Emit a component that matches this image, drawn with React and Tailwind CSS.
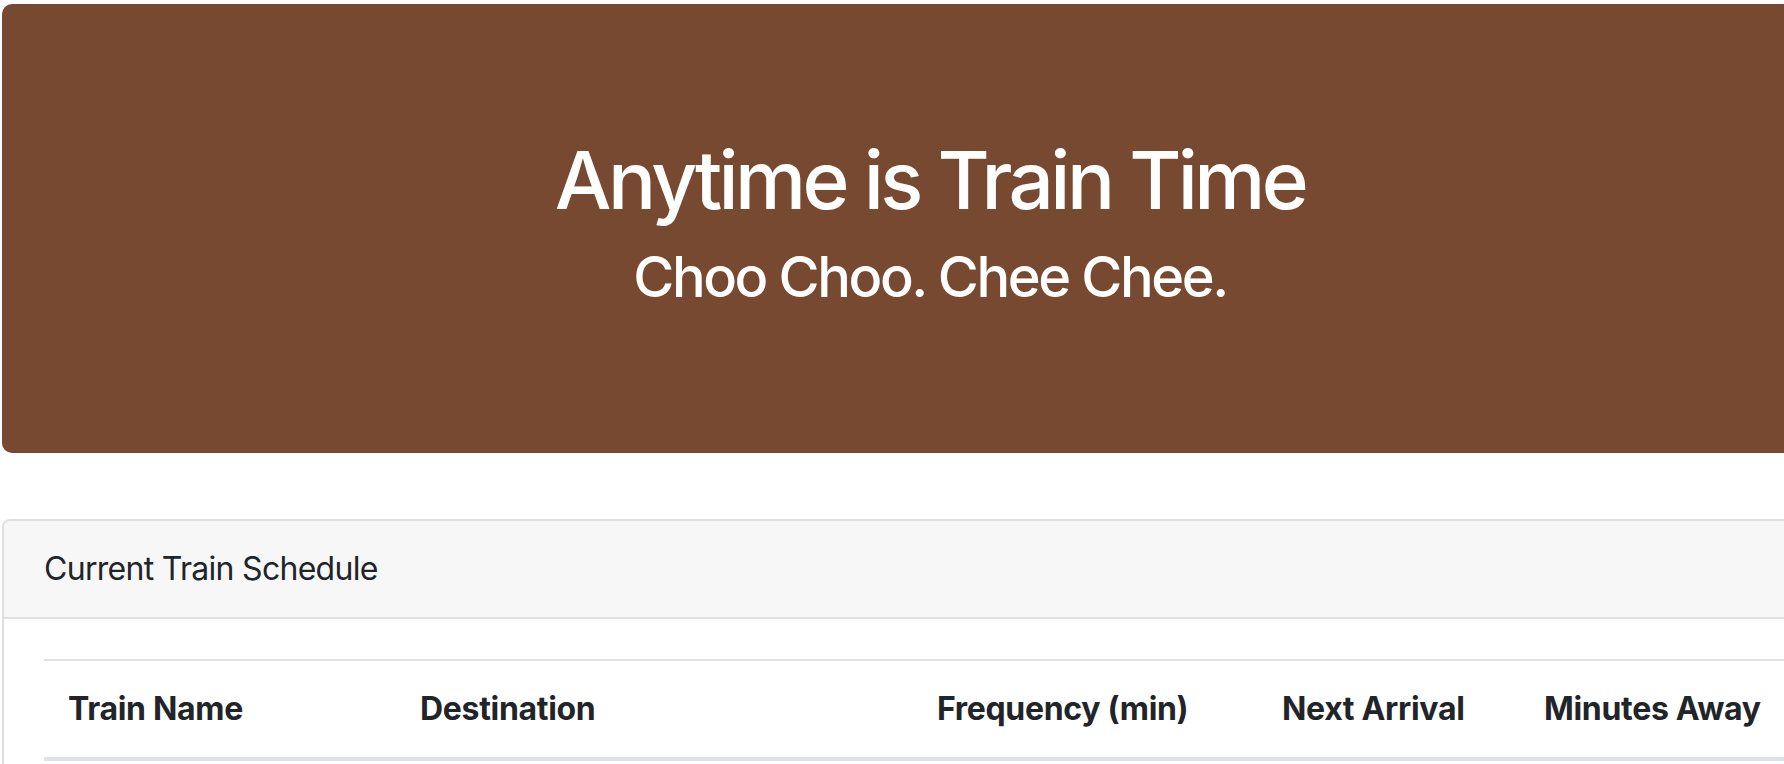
import React from "react";

const columns = [
  { label: "Train Name", width: "w-[352px]" },
  { label: "Destination", width: "w-[517px]" },
  { label: "Frequency (min)", width: "w-[345px]" },
  { label: "Next Arrival", width: "w-[262px]" },
  { label: "Minutes Away", width: "w-[294px]" },
];

const Jumbotron = () => (
  <div className="bg-[#784931] rounded-[10px] pt-[128px] pb-[142px] px-16 text-center text-white">
    <h1 className="text-[80px] leading-[1.2] font-medium tracking-[-0.045em] mb-4">Anytime is Train Time</h1>
    <h3 className="text-[56px] leading-[1.2] font-medium tracking-[-0.043em]">Choo Choo. Chee Chee.</h3>
  </div>
);

const Schedule = () => (
  <div className="mt-[66px] border-2 border-[#dfdfdf] rounded-lg bg-white">
    <div className="bg-[#f7f7f7] px-10 py-6 text-[32px] leading-[48px] tracking-[-0.022em] text-[#212529] border-b-2 border-[#dfdfdf] rounded-t-md">
      Current Train Schedule
    </div>
    <div className="p-10">
      <table className="w-[1770px] table-fixed border-collapse text-[#212529]">
        <thead>
          <tr>
            {columns.map((col) => (
              <th
                key={col.label}
                className={`${col.width} text-left font-bold text-[32px] leading-[48px] tracking-[-0.01em] p-6 border-t-2 border-b-4 border-[#dee2e6]`}
              >
                {col.label}
              </th>
            ))}
          </tr>
        </thead>
        <tbody>
          <tr>
            <td colSpan={5} className="h-[97px]"></td>
          </tr>
        </tbody>
      </table>
    </div>
  </div>
);

export default function App() {
  return (
    <div className="w-full overflow-hidden bg-white font-['Inter',sans-serif]">
      <div className="w-[1856px] ml-[2px] pt-[4px] pb-10">
        <Jumbotron />
        <Schedule />
      </div>
    </div>
  );
}
